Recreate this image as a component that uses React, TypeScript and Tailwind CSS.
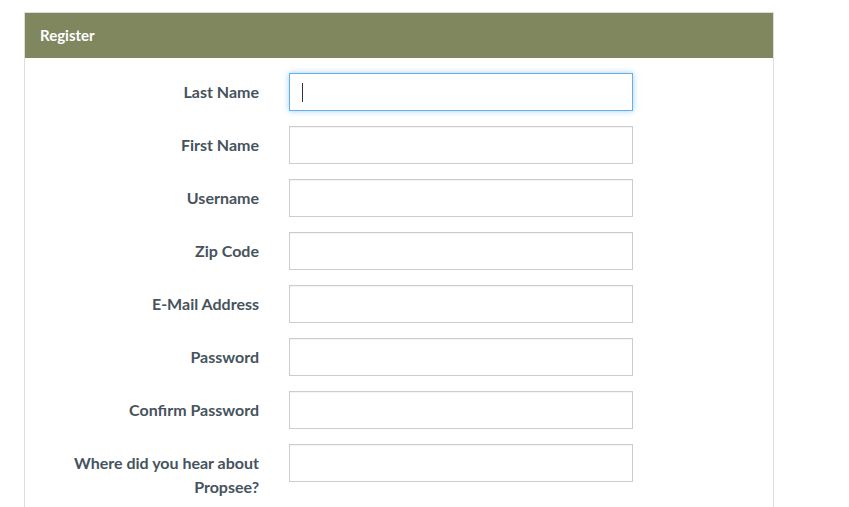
const fields = [
  'Last Name',
  'First Name',
  'Username',
  'Zip Code',
  'E-Mail Address',
  'Password',
  'Confirm Password',
  'Where did you hear about Propsee?',
]

export default function App() {
  return (
    <div className="h-[507px] overflow-hidden bg-white pl-6 pt-3 font-['Lato',sans-serif]">
      <div className="w-[750px] min-h-[520px] border border-[#dddddd] border-b-0">
        <div className="h-[45px] bg-[#80875f] px-[15px] flex items-center">
          <span className="text-white text-[15px] font-bold">Register</span>
        </div>
        <div className="pt-[15px] flex flex-col gap-[15px]">
          {fields.map((label, i) => (
            <div key={label} className="flex items-start">
              <label className="w-[234px] text-right text-[16px] font-bold text-[#46535d] leading-6 pt-[7px] pl-[45px]">
                {label}
              </label>
              <div className="ml-[30px] w-[344px] h-[38px]">
                {i === 0 ? (
                  <div className="h-full border border-[#66afe9] shadow-[0_0_6px_rgba(102,175,233,0.6)] flex items-center pl-3">
                    <div className="w-px h-[19px] bg-[#333]" />
                  </div>
                ) : (
                  <div className="h-full border border-[#cccccc] shadow-[inset_0_1px_1px_rgba(0,0,0,0.05)]" />
                )}
              </div>
            </div>
          ))}
        </div>
      </div>
    </div>
  )
}
